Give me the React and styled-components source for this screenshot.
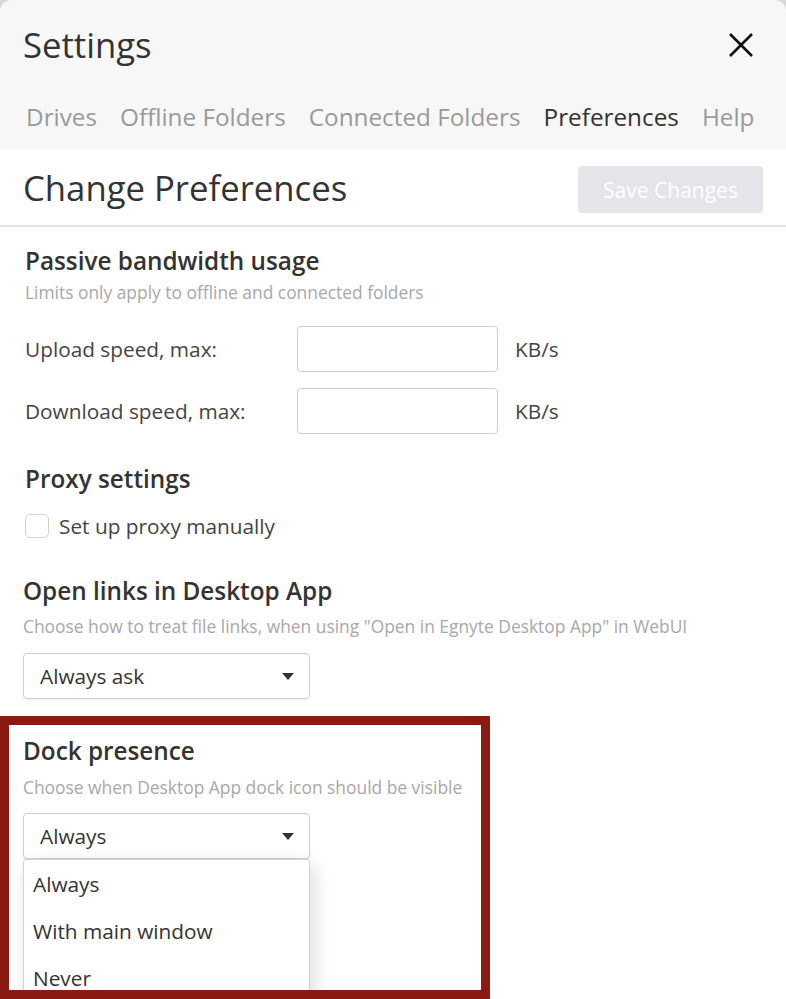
import styled, { createGlobalStyle } from "styled-components";

const GlobalStyle = createGlobalStyle`
  html, body {
    margin: 0;
    padding: 0;
    background: #d9d9d9;
  }
  body {
    font-family: "Open Sans", "Liberation Sans", sans-serif;
    color: #333;
  }
`;

const Window = styled.div`
  width: 786px;
  height: 999px;
  background: white;
  border-radius: 12px 12px 0 0;
  overflow: hidden;
  display: flex;
  flex-direction: column;
`;

const Header = styled.div`
  background: #f7f7f7;
  padding: 22px 24px 17px 23px;
  display: flex;
  flex-direction: column;
  gap: 33px;
`;

const TitleRow = styled.div`
  display: flex;
  justify-content: space-between;
  align-items: center;
  height: 46px;
`;

const Title = styled.h1`
  margin: 0;
  font-size: 34.7px;
  font-weight: 400;
  line-height: 46px;
  color: #333;
`;

const CloseButton = styled.button`
  border: none;
  background: none;
  padding: 0;
  margin-right: 8px;
  width: 26px;
  height: 26px;
  display: flex;
  cursor: pointer;
`;

const Tabs = styled.nav`
  display: flex;
  gap: 23px;
  padding-left: 3px;
`;

const Tab = styled.span`
  font-size: 24.3px;
  line-height: 32px;
  color: ${(p) => (p.$active ? "#333" : "#9a9a9a")};
`;

const Toolbar = styled.div`
  height: 80px;
  display: flex;
  justify-content: space-between;
  align-items: center;
  padding: 0 23px;
  border-bottom: 2px solid #e2e2e2;
`;

const SaveButton = styled.button`
  width: 185px;
  height: 47px;
  margin-top: 4px;
  border: none;
  border-radius: 4px;
  background: #e4e5e8;
  color: white;
  font-family: inherit;
  font-size: 21px;
`;

const Content = styled.div`
  display: flex;
  flex-direction: column;
`;

const Section = styled.section`
  padding-left: ${(p) => p.$inset || 25}px;
  margin-top: ${(p) => p.$top || 0}px;
`;

const Heading = styled.h2`
  margin: 0;
  font-size: 24.3px;
  font-weight: 600;
  line-height: 30px;
  color: #333;
`;

const Hint = styled.p`
  margin: ${(p) => p.$gap || 4}px 0 0;
  font-size: 17.4px;
  line-height: 24px;
  color: #a8a8a8;
`;

const FieldRow = styled.div`
  display: flex;
  align-items: center;
  height: 46px;
  margin-top: ${(p) => p.$top}px;
`;

const Label = styled.label`
  width: 272px;
  font-size: 20.8px;
  color: #444;
`;

const SpeedInput = styled.input`
  box-sizing: border-box;
  width: 201px;
  height: 46px;
  border: 1px solid #cfcfcf;
  border-radius: 4px;
  background: white;
  outline: none;
`;

const Unit = styled.span`
  margin-left: 17px;
  font-size: 20.8px;
  color: #444;
`;

const CheckRow = styled.label`
  display: flex;
  align-items: center;
  gap: 10px;
  margin-top: 18px;
  font-size: 20.8px;
  color: #444;
`;

const CheckBox = styled.span`
  box-sizing: border-box;
  width: 24px;
  height: 24px;
  border: 1px solid #d2d2d2;
  border-radius: 5px;
  background: white;
`;

const SelectWrap = styled.div`
  position: relative;
  width: 287px;
  margin-top: ${(p) => p.$top}px;
`;

const SelectBox = styled.div`
  box-sizing: border-box;
  height: 46px;
  display: flex;
  align-items: center;
  justify-content: space-between;
  padding: 0 15px 0 16px;
  border: 1px solid #cfcfcf;
  border-radius: 4px;
  background: white;
  box-shadow: 0 1px 2px rgba(0, 0, 0, 0.06);
  font-size: 20.8px;
  color: #333;
`;

const Caret = styled.span`
  width: 0;
  height: 0;
  border-left: 6px solid transparent;
  border-right: 6px solid transparent;
  border-top: 7px solid #333;
`;

const Menu = styled.ul`
  position: absolute;
  top: 100%;
  left: 0;
  right: 0;
  margin: 0;
  padding: 0;
  list-style: none;
  background: white;
  border: 1px solid #d4d4d4;
  border-radius: 3px;
  box-shadow: 4px 6px 18px rgba(0, 0, 0, 0.14);
`;

const MenuItem = styled.li`
  height: 47px;
  display: flex;
  align-items: center;
  padding-left: 9px;
  font-size: 20.8px;
  color: #333;
`;

const Highlight = styled.div`
  box-sizing: border-box;
  width: 490px;
  height: 283px;
  margin-top: 17px;
  border: 9px solid #8a1a12;
  overflow: hidden;
  padding: 11px 0 0 14px;
`;

function CloseIcon() {
  return (
    <svg width="26" height="26" viewBox="0 0 26 26">
      <path d="M2 2 L24 24 M24 2 L2 24" stroke="#111" strokeWidth="2.6" strokeLinecap="butt" />
    </svg>
  );
}

function Select({ value, top, options }) {
  return (
    <SelectWrap $top={top}>
      <SelectBox>
        {value}
        <Caret />
      </SelectBox>
      {options && (
        <Menu>
          {options.map((o) => (
            <MenuItem key={o}>{o}</MenuItem>
          ))}
        </Menu>
      )}
    </SelectWrap>
  );
}

export default function App() {
  return (
    <>
      <GlobalStyle />
      <Window>
        <Header>
          <TitleRow>
            <Title>Settings</Title>
            <CloseButton aria-label="Close">
              <CloseIcon />
            </CloseButton>
          </TitleRow>
          <Tabs>
            <Tab>Drives</Tab>
            <Tab>Offline Folders</Tab>
            <Tab>Connected Folders</Tab>
            <Tab $active>Preferences</Tab>
            <Tab>Help</Tab>
          </Tabs>
        </Header>

        <Toolbar>
          <Title>Change Preferences</Title>
          <SaveButton disabled>Save Changes</SaveButton>
        </Toolbar>

        <Content>
          <Section $top={19}>
            <Heading>Passive bandwidth usage</Heading>
            <Hint>Limits only apply to offline and connected folders</Hint>
            <FieldRow $top={22}>
              <Label>Upload speed, max:</Label>
              <SpeedInput />
              <Unit>KB/s</Unit>
            </FieldRow>
            <FieldRow $top={16}>
              <Label>Download speed, max:</Label>
              <SpeedInput />
              <Unit>KB/s</Unit>
            </FieldRow>
          </Section>

          <Section $top={30}>
            <Heading>Proxy settings</Heading>
            <CheckRow>
              <CheckBox />
              Set up proxy manually
            </CheckRow>
          </Section>

          <Section $top={36} $inset={23}>
            <Heading>Open links in Desktop App</Heading>
            <Hint $gap={8}>
              Choose how to treat file links, when using "Open in Egnyte Desktop App" in WebUI
            </Hint>
            <Select value="Always ask" top={15} />
          </Section>

          <Highlight>
            <Heading>Dock presence</Heading>
            <Hint $gap={9}>Choose when Desktop App dock icon should be visible</Hint>
            <Select
              value="Always"
              top={14}
              options={["Always", "With main window", "Never"]}
            />
          </Highlight>
        </Content>
      </Window>
    </>
  );
}
